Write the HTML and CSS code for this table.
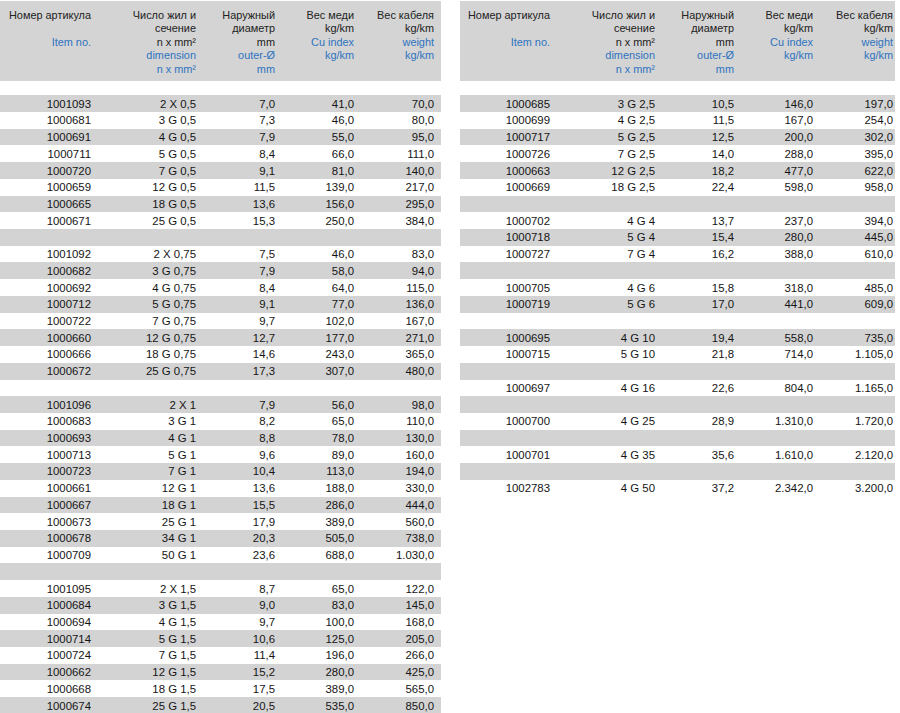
FILE: index.html
```html
<!DOCTYPE html>
<html lang="ru">
<head>
<meta charset="utf-8">
<title>Кабели</title>
<link rel="stylesheet" href="styles.css">
</head>
<body>
<div class="page">
<table class="spec spec-left">
<colgroup><col class="c1"><col class="c2"><col class="c3"><col class="c4"><col class="c5"></colgroup>
<thead>
<tr class="head">
<th>Номер артикула<br>&nbsp;<br><span class="en">Item no.</span></th>
<th>Число жил и<br>сечение<br>n x mm²<br><span class="en">dimension<br>n x mm²</span></th>
<th>Наружный<br>диаметр<br>mm<br><span class="en">outer-Ø<br>mm</span></th>
<th>Вес меди<br>kg/km<br><span class="en">Cu index<br>kg/km</span></th>
<th>Вес кабеля<br>kg/km<br><span class="en">weight<br>kg/km</span></th>
</tr>
<tr class="gap"><td colspan="5"></td></tr>
</thead>
<tbody>
<tr><td>1001093</td><td>2 X 0,5</td><td>7,0</td><td>41,0</td><td>70,0</td></tr>
<tr><td>1000681</td><td>3 G 0,5</td><td>7,3</td><td>46,0</td><td>80,0</td></tr>
<tr><td>1000691</td><td>4 G 0,5</td><td>7,9</td><td>55,0</td><td>95,0</td></tr>
<tr><td>1000711</td><td>5 G 0,5</td><td>8,4</td><td>66,0</td><td>111,0</td></tr>
<tr><td>1000720</td><td>7 G 0,5</td><td>9,1</td><td>81,0</td><td>140,0</td></tr>
<tr><td>1000659</td><td>12 G 0,5</td><td>11,5</td><td>139,0</td><td>217,0</td></tr>
<tr><td>1000665</td><td>18 G 0,5</td><td>13,6</td><td>156,0</td><td>295,0</td></tr>
<tr><td>1000671</td><td>25 G 0,5</td><td>15,3</td><td>250,0</td><td>384,0</td></tr>
<tr><td colspan="5"></td></tr>
<tr><td>1001092</td><td>2 X 0,75</td><td>7,5</td><td>46,0</td><td>83,0</td></tr>
<tr><td>1000682</td><td>3 G 0,75</td><td>7,9</td><td>58,0</td><td>94,0</td></tr>
<tr><td>1000692</td><td>4 G 0,75</td><td>8,4</td><td>64,0</td><td>115,0</td></tr>
<tr><td>1000712</td><td>5 G 0,75</td><td>9,1</td><td>77,0</td><td>136,0</td></tr>
<tr><td>1000722</td><td>7 G 0,75</td><td>9,7</td><td>102,0</td><td>167,0</td></tr>
<tr><td>1000660</td><td>12 G 0,75</td><td>12,7</td><td>177,0</td><td>271,0</td></tr>
<tr><td>1000666</td><td>18 G 0,75</td><td>14,6</td><td>243,0</td><td>365,0</td></tr>
<tr><td>1000672</td><td>25 G 0,75</td><td>17,3</td><td>307,0</td><td>480,0</td></tr>
<tr><td colspan="5"></td></tr>
<tr><td>1001096</td><td>2 X 1</td><td>7,9</td><td>56,0</td><td>98,0</td></tr>
<tr><td>1000683</td><td>3 G 1</td><td>8,2</td><td>65,0</td><td>110,0</td></tr>
<tr><td>1000693</td><td>4 G 1</td><td>8,8</td><td>78,0</td><td>130,0</td></tr>
<tr><td>1000713</td><td>5 G 1</td><td>9,6</td><td>89,0</td><td>160,0</td></tr>
<tr><td>1000723</td><td>7 G 1</td><td>10,4</td><td>113,0</td><td>194,0</td></tr>
<tr><td>1000661</td><td>12 G 1</td><td>13,6</td><td>188,0</td><td>330,0</td></tr>
<tr><td>1000667</td><td>18 G 1</td><td>15,5</td><td>286,0</td><td>444,0</td></tr>
<tr><td>1000673</td><td>25 G 1</td><td>17,9</td><td>389,0</td><td>560,0</td></tr>
<tr><td>1000678</td><td>34 G 1</td><td>20,3</td><td>505,0</td><td>738,0</td></tr>
<tr><td>1000709</td><td>50 G 1</td><td>23,6</td><td>688,0</td><td>1.030,0</td></tr>
<tr><td colspan="5"></td></tr>
<tr><td>1001095</td><td>2 X 1,5</td><td>8,7</td><td>65,0</td><td>122,0</td></tr>
<tr><td>1000684</td><td>3 G 1,5</td><td>9,0</td><td>83,0</td><td>145,0</td></tr>
<tr><td>1000694</td><td>4 G 1,5</td><td>9,7</td><td>100,0</td><td>168,0</td></tr>
<tr><td>1000714</td><td>5 G 1,5</td><td>10,6</td><td>125,0</td><td>205,0</td></tr>
<tr><td>1000724</td><td>7 G 1,5</td><td>11,4</td><td>196,0</td><td>266,0</td></tr>
<tr><td>1000662</td><td>12 G 1,5</td><td>15,2</td><td>280,0</td><td>425,0</td></tr>
<tr><td>1000668</td><td>18 G 1,5</td><td>17,5</td><td>389,0</td><td>565,0</td></tr>
<tr><td>1000674</td><td>25 G 1,5</td><td>20,5</td><td>535,0</td><td>850,0</td></tr>
</tbody>
</table>

<table class="spec spec-right">
<colgroup><col class="c1r"><col class="c2"><col class="c3"><col class="c4"><col class="c5r"></colgroup>
<thead>
<tr class="head">
<th>Номер артикула<br>&nbsp;<br><span class="en">Item no.</span></th>
<th>Число жил и<br>сечение<br>n x mm²<br><span class="en">dimension<br>n x mm²</span></th>
<th>Наружный<br>диаметр<br>mm<br><span class="en">outer-Ø<br>mm</span></th>
<th>Вес меди<br>kg/km<br><span class="en">Cu index<br>kg/km</span></th>
<th>Вес кабеля<br>kg/km<br><span class="en">weight<br>kg/km</span></th>
</tr>
<tr class="gap"><td colspan="5"></td></tr>
</thead>
<tbody>
<tr><td>1000685</td><td>3 G 2,5</td><td>10,5</td><td>146,0</td><td>197,0</td></tr>
<tr><td>1000699</td><td>4 G 2,5</td><td>11,5</td><td>167,0</td><td>254,0</td></tr>
<tr><td>1000717</td><td>5 G 2,5</td><td>12,5</td><td>200,0</td><td>302,0</td></tr>
<tr><td>1000726</td><td>7 G 2,5</td><td>14,0</td><td>288,0</td><td>395,0</td></tr>
<tr><td>1000663</td><td>12 G 2,5</td><td>18,2</td><td>477,0</td><td>622,0</td></tr>
<tr><td>1000669</td><td>18 G 2,5</td><td>22,4</td><td>598,0</td><td>958,0</td></tr>
<tr><td colspan="5"></td></tr>
<tr><td>1000702</td><td>4 G 4</td><td>13,7</td><td>237,0</td><td>394,0</td></tr>
<tr><td>1000718</td><td>5 G 4</td><td>15,4</td><td>280,0</td><td>445,0</td></tr>
<tr><td>1000727</td><td>7 G 4</td><td>16,2</td><td>388,0</td><td>610,0</td></tr>
<tr><td colspan="5"></td></tr>
<tr><td>1000705</td><td>4 G 6</td><td>15,8</td><td>318,0</td><td>485,0</td></tr>
<tr><td>1000719</td><td>5 G 6</td><td>17,0</td><td>441,0</td><td>609,0</td></tr>
<tr><td colspan="5"></td></tr>
<tr><td>1000695</td><td>4 G 10</td><td>19,4</td><td>558,0</td><td>735,0</td></tr>
<tr><td>1000715</td><td>5 G 10</td><td>21,8</td><td>714,0</td><td>1.105,0</td></tr>
<tr><td colspan="5"></td></tr>
<tr><td>1000697</td><td>4 G 16</td><td>22,6</td><td>804,0</td><td>1.165,0</td></tr>
<tr><td colspan="5"></td></tr>
<tr><td>1000700</td><td>4 G 25</td><td>28,9</td><td>1.310,0</td><td>1.720,0</td></tr>
<tr><td colspan="5"></td></tr>
<tr><td>1000701</td><td>4 G 35</td><td>35,6</td><td>1.610,0</td><td>2.120,0</td></tr>
<tr><td colspan="5"></td></tr>
<tr><td>1002783</td><td>4 G 50</td><td>37,2</td><td>2.342,0</td><td>3.200,0</td></tr>
</tbody>
</table>
</div>
</body>
</html>
```

FILE: styles.css
```css
html, body {
  margin: 0;
  padding: 0;
  background: #ffffff;
}

body {
  font-family: "Liberation Sans", Arial, sans-serif;
  font-size: 11.4px;
  color: #151515;
}

.page {
  display: flex;
  align-items: flex-start;
  gap: 19px;
  padding-top: 1px;
}

.spec {
  border-collapse: collapse;
  border-spacing: 0;
  table-layout: fixed;
}

.spec-left { width: 441px; }
.spec-right { width: 435px; }

.c1 { width: 98px; }
.c1r { width: 97px; }
.c2 { width: 105px; }
.c3 { width: 79px; }
.c4 { width: 79px; }
.c5 { width: 80px; }
.c5r { width: 75px; }

.spec th,
.spec td {
  padding: 0 7px 0 0;
  text-align: right;
  white-space: nowrap;
  overflow: hidden;
}

.spec-right td:last-child,
.spec-right th:last-child {
  padding-right: 2px;
}

.head th {
  background: #d4d4d4;
  font-weight: normal;
  font-size: 10.9px;
  vertical-align: top;
  line-height: 13.4px;
  height: 80px;
  box-sizing: border-box;
  padding-top: 8px;
  color: #222;
}

.en {
  color: #2e73c0;
}

.gap td {
  height: 14.3px;
  padding: 0;
  background: #ffffff;
}

.spec tbody tr {
  height: 16.72px;
}

.spec tbody td {
  height: 16.72px;
  line-height: 14px;
  vertical-align: middle;
  box-sizing: border-box;
}

.spec tbody tr:nth-child(odd) td {
  background: #d3d3d3;
}
```
